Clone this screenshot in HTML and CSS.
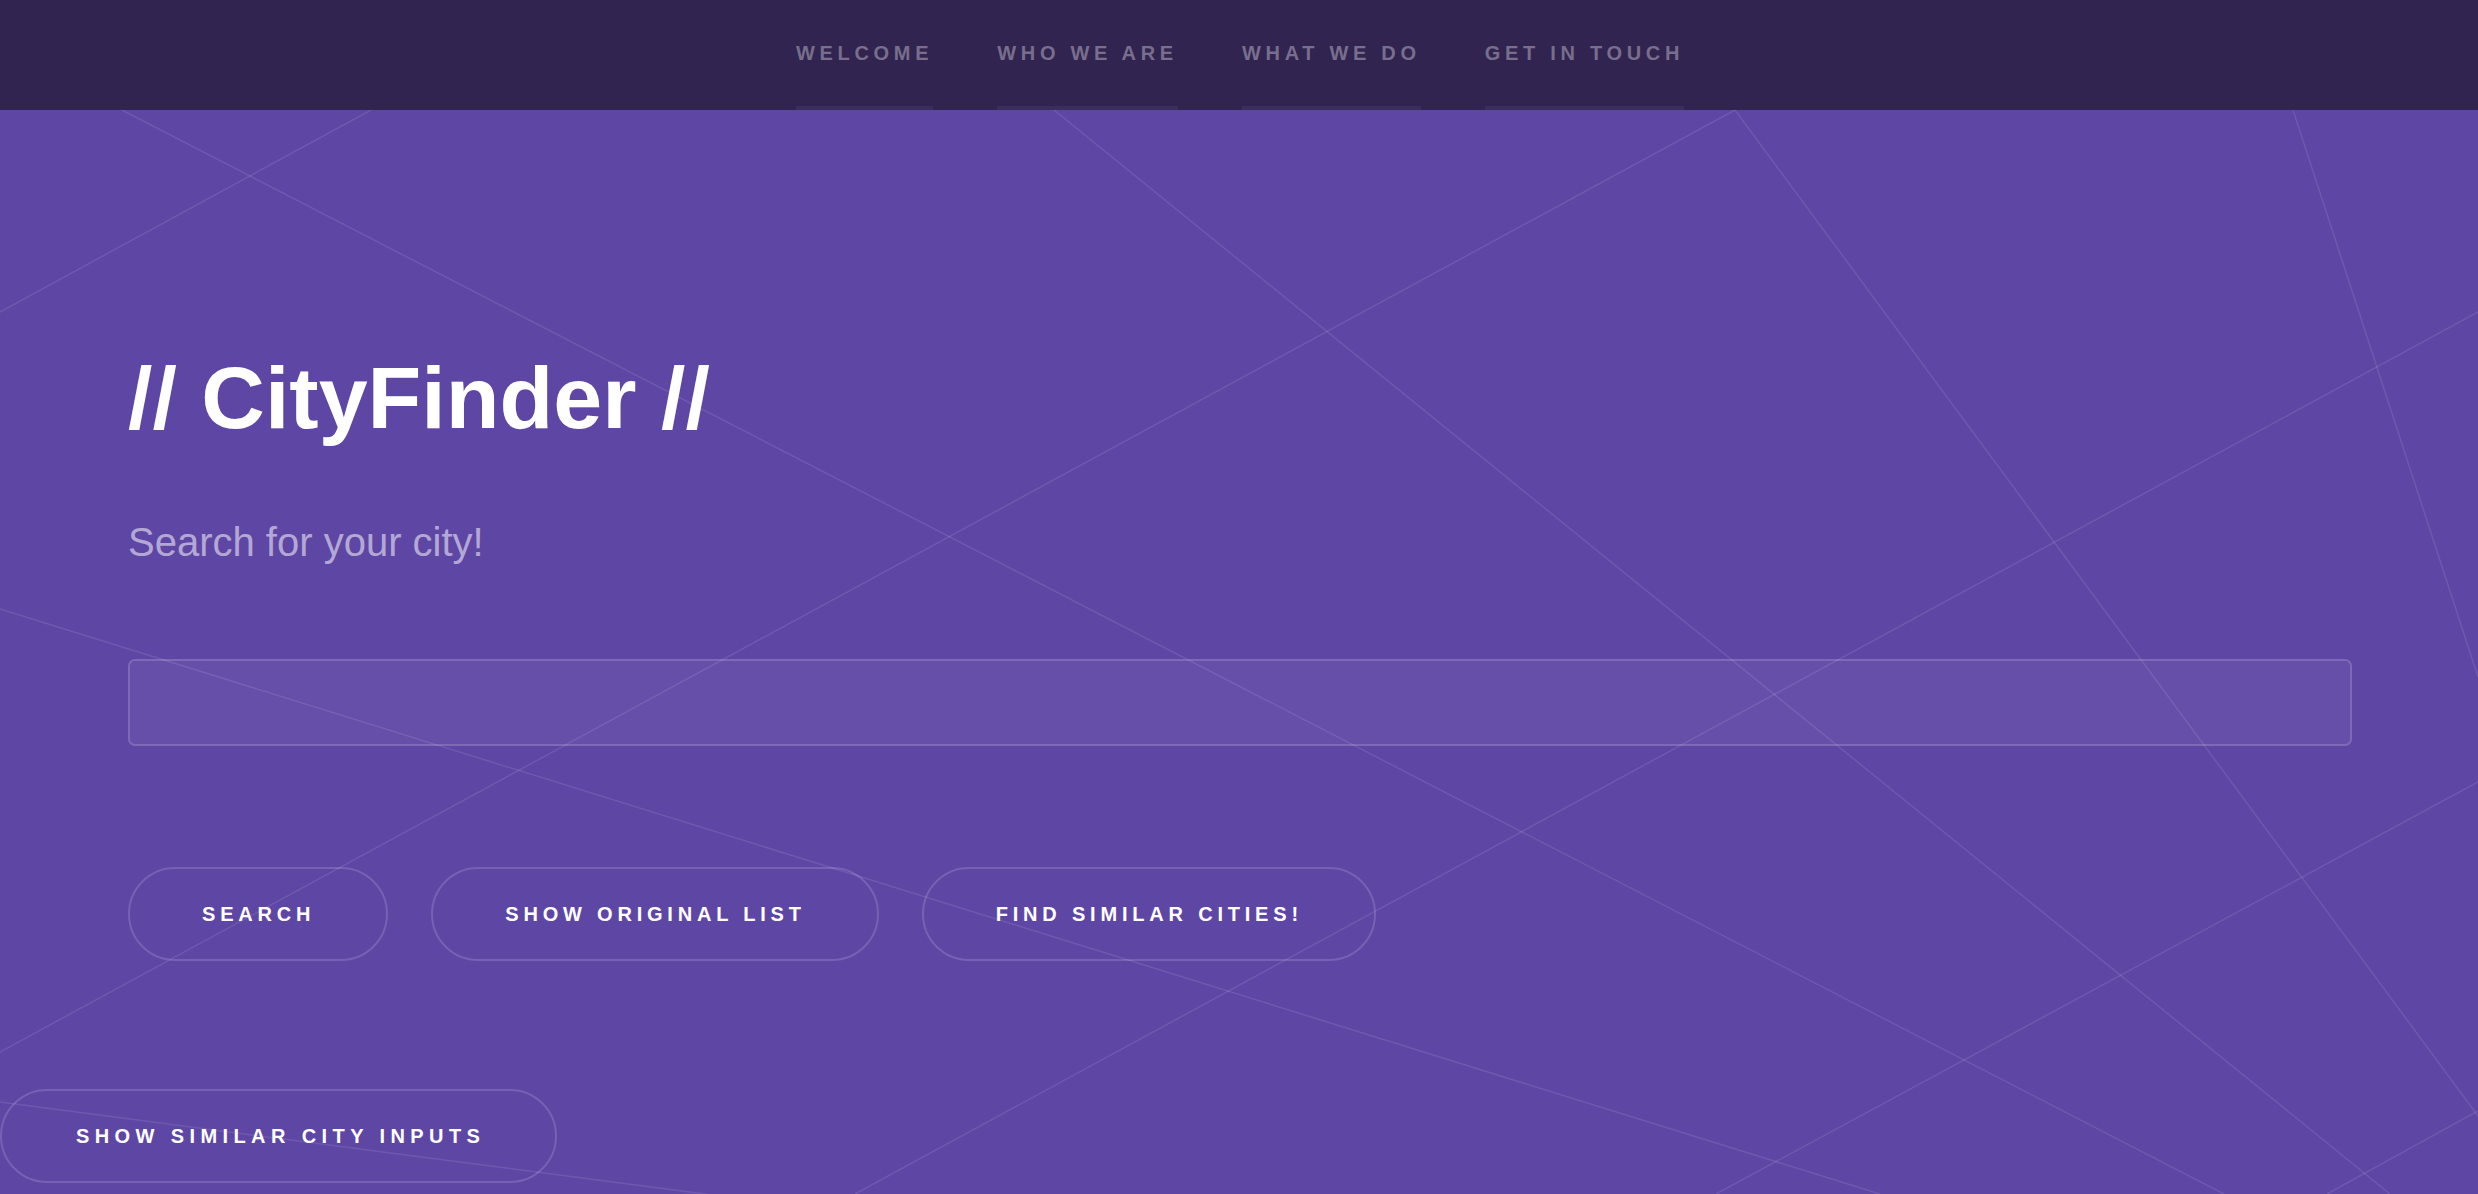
FILE: index.html
```html
<!DOCTYPE html>
<html lang="en">
<head>
<meta charset="utf-8">
<title>CityFinder</title>
<link rel="stylesheet" href="styles.css">
</head>
<body>
<header class="site-header">
  <nav class="nav">
    <a class="nav-link" href="#">Welcome</a>
    <a class="nav-link" href="#">Who we are</a>
    <a class="nav-link" href="#">What we do</a>
    <a class="nav-link" href="#">Get in touch</a>
  </nav>
</header>
<main class="main">
  <svg class="bg-lines" width="2478" height="1084" viewBox="0 110 2478 1084" aria-hidden="true">
    <g stroke="rgba(255,255,255,0.1)" stroke-width="1.5" fill="none">
      <line x1="122" y1="110" x2="2224" y2="1194"/>
      <line x1="0" y1="609" x2="1880" y2="1194"/>
      <line x1="0" y1="1102" x2="720" y2="1196"/>
      <line x1="1735" y1="110" x2="0" y2="1052"/>
      <line x1="1735" y1="110" x2="2478" y2="1116"/>
      <line x1="2293" y1="110" x2="2478" y2="677"/>
      <line x1="2478" y1="312" x2="855" y2="1194"/>
      <line x1="371" y1="110" x2="0" y2="312"/>
      <line x1="1054" y1="110" x2="2390" y2="1194"/>
      <line x1="2478" y1="782" x2="1716" y2="1194"/>
      <line x1="2478" y1="1111" x2="2327" y2="1194"/>
    </g>
  </svg>
  <section class="intro">
    <h1 class="title">// CityFinder //</h1>
    <p class="subtitle">Search for your city!</p>
    <input class="search-input" type="text" aria-label="City">
    <div class="actions">
      <button class="btn" type="button">Search</button>
      <button class="btn" type="button">Show original list</button>
      <button class="btn" type="button">Find similar cities!</button>
    </div>
  </section>
  <div class="outer-actions">
    <button class="btn btn-wide" type="button">Show similar city inputs</button>
  </div>
</main>
</body>
</html>
```

FILE: styles.css
```css
* {
  box-sizing: border-box;
}

html, body {
  margin: 0;
  padding: 0;
}

body {
  background: #5e46a5;
  font-family: "Liberation Sans", Arial, Helvetica, sans-serif;
  color: #ffffff;
  overflow: hidden;
}

.site-header {
  height: 110px;
  background: #312450;
  position: relative;
  z-index: 2;
}

.nav {
  display: flex;
  justify-content: center;
  gap: 64px;
  padding-left: 2px;
  height: 110px;
}

.nav-link {
  display: block;
  height: 110px;
  padding-top: 43px;
  line-height: 20px;
  font-size: 20px;
  font-weight: 700;
  letter-spacing: 4.7px;
  text-transform: uppercase;
  text-decoration: none;
  color: rgba(255, 255, 255, 0.35);
  border-bottom: 4px solid #3b2d5e;
}

.main {
  position: relative;
  min-height: 1084px;
  overflow: hidden;
  background: #5e46a5;
}

.bg-lines {
  position: absolute;
  left: 0;
  top: 0;
  z-index: 0;
}

.intro {
  position: relative;
  z-index: 1;
  padding: 244px 126px 0 128px;
}

.title {
  margin: 0;
  font-size: 88px;
  line-height: 88px;
  font-weight: 700;
  color: #ffffff;
}

.subtitle {
  margin: 80px 0 0;
  font-size: 40px;
  line-height: 40px;
  font-weight: 400;
  color: rgba(255, 255, 255, 0.55);
}

.search-input {
  display: block;
  width: 100%;
  height: 87px;
  margin-top: 97px;
  border: 2px solid rgba(255, 255, 255, 0.15);
  border-radius: 7px;
  background: rgba(255, 255, 255, 0.05);
  color: #ffffff;
  font-family: inherit;
  font-size: 24px;
  padding: 0 20px;
  outline: none;
}

.actions {
  display: flex;
  gap: 43px;
  margin-top: 121px;
}

.btn {
  display: inline-flex;
  align-items: center;
  justify-content: center;
  height: 94px;
  padding: 0 71px 0 72px;
  border: 2px solid rgba(255, 255, 255, 0.15);
  border-radius: 47px;
  background: transparent;
  color: #ffffff;
  font-family: "Liberation Sans", Arial, Helvetica, sans-serif;
  font-size: 20px;
  font-weight: 700;
  letter-spacing: 4.8px;
  text-transform: uppercase;
  white-space: nowrap;
  cursor: pointer;
}

.outer-actions {
  position: relative;
  z-index: 1;
  margin-top: 128px;
  display: flex;
}

.btn-wide {
  letter-spacing: 5.4px;
  padding: 0 70px 0 74px;
}
```
